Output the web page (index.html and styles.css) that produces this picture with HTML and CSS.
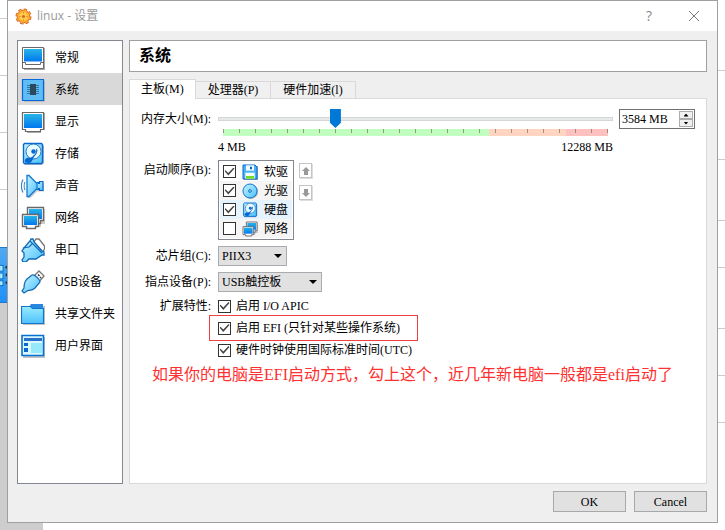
FILE: index.html
```html
<!DOCTYPE html>
<html lang="zh-CN">
<head>
<meta charset="utf-8">
<meta name="viewport" content="width=device-width, initial-scale=1">
<title>linux - 设置</title>
<link rel="stylesheet" href="styles.css">
</head>
<body>
<svg class="defs" width="0" height="0" aria-hidden="true">
  <defs>
    <linearGradient id="screen" x1="0" y1="0" x2="0" y2="1"><stop offset="0" stop-color="#28b4e8"/><stop offset="1" stop-color="#0078f0"/></linearGradient>
    <linearGradient id="pale" x1="0" y1="0" x2="1" y2="1"><stop offset="0" stop-color="#c4f4ff"/><stop offset="1" stop-color="#4cc0ff"/></linearGradient>
    <linearGradient id="folder" x1="0" y1="0" x2="0" y2="1"><stop offset="0" stop-color="#98ecff"/><stop offset="1" stop-color="#50c0fc"/></linearGradient>
    <g id="disk">
      <path d="M3 2h17l2 2v17l-2 2H3l-2-2V4z" fill="#a8b4bc"/>
      <path d="M2.500 1.500h17l1 1v18l-1 1h-17l-1-1v-18z" fill="url(#pale)" stroke="#0868d0" stroke-width="1.400"/>
      <circle cx="11.500" cy="9.500" r="7.500" fill="#e8fcff" stroke="#2878c0"/>
      <circle cx="11.500" cy="9.500" r="2.200" fill="#0868d8"/>
      <path d="M14.500 7c1 3-1 6-3 7" fill="none" stroke="#2878c0" stroke-width="1.400"/>
      <path d="M3 20c-1-3 2-5 5-4l5-3-3 6c-1 2-4 3-7 1z" fill="#0868d0"/>
    </g>
    <g id="net">
      <path d="M9 3h16v15h-4v3H9z" fill="#999" opacity=".5"/>
      <path d="M7.500 1.500h16v13h-3v3h-10v-3h-3z" fill="#fff" stroke="#686868" stroke-width="1.400"/>
      <path d="M9 3h13v10H9z" fill="url(#screen)"/>
      <path d="M2.500 8.500h16v12h-3v2h-9v-2h-4z" fill="#fff" stroke="#686868" stroke-width="1.400"/>
      <path d="M4 10h13v9H4z" fill="url(#screen)"/>
    </g>
  </defs>
</svg>
<div class="backdrop" aria-hidden="true">
  <div class="behind-left">
    <svg class="behind-icon" viewBox="0 0 8 56"><path d="M0 18h3v6H0M0 26h3v6H0M0 34h3v5H0" fill="#a8f0ff" stroke="#0868b8"/><circle cx="7" cy="20" r="1.500" fill="#234"/><circle cx="7" cy="28" r="1.500" fill="#234"/><circle cx="7" cy="36" r="1.500" fill="#234"/></svg>
  </div>
  <div class="behind-right"></div>
</div>
<main class="dialog">
  <header class="titlebar">
    <svg class="gear" viewBox="0 0 17 17"><circle cx="8.500" cy="8.500" r="6.800" fill="none" stroke="#d85818" stroke-width="2.400" stroke-dasharray="3.200 2.140"/><circle cx="8.500" cy="8.500" r="6.300" fill="#ffb438" stroke="#e06c20"/><circle cx="8.500" cy="8.500" r="6.600" fill="none" stroke="#ffb438" stroke-width="1.200" stroke-dasharray="2 3.184" stroke-dashoffset="-.6"/><circle cx="8.500" cy="8.500" r="3.800" fill="#ffd050"/><circle cx="8.500" cy="8.500" r="1.600" fill="#d86820"/><path d="M4.500 8.500h1M11.500 8.500h1M8.500 4.500v1M8.500 11.500v1" stroke="#e07020"/></svg>
    <h1>linux - 设置</h1>
    <button class="window-button" aria-label="帮助">?</button>
    <button class="window-button" aria-label="关闭"><svg width="10" height="10" viewBox="0 0 10 10"><path d="M0 0l10 10M10 0 0 10" stroke="#777"/></svg></button>
  </header>
  <div class="body">
    <nav class="sidebar">
      <a href="#general"><svg viewBox="0 0 24 24"><path d="M2 2h22v22H3z" fill="#aaa"/><path d="M1.500 1.500h21v21h-21z" fill="#fff" stroke="#686868"/><path d="M3 3h18v12.500H3z" fill="url(#screen)"/><path d="M1.500 16.500h3v2h15v-2h3" fill="none" stroke="#686868"/></svg>常规</a>
      <a href="#system" class="current" aria-current="page"><svg viewBox="0 0 24 24"><path d="M3 3h21v21H3z" fill="#aaa" opacity=".6"/><path d="M1.500 1.500h21v21h-21z" fill="#60bcf4" stroke="#0868d8" stroke-width="1.200"/><path d="M6 7.500h12M6 9.500h12M6 11.500h12M6 13.500h12M6 15.500h12" stroke="#2c78a8"/><path d="M9 6h6v11H9z" fill="#2c485c"/></svg>系统</a>
      <a href="#display"><svg viewBox="0 0 24 24"><path d="M3 3h21v17h-4v3H6v-3H3z" fill="#aaa"/><path d="M1.500 2.500h21v17h-3v2h-15v-2h-3z" fill="#fff" stroke="#686868" stroke-width="1.200"/><path d="M3 4h18v14H3z" fill="url(#screen)"/></svg>显示</a>
      <a href="#storage"><svg viewBox="0 0 24 24"><use href="#disk" x="1"/></svg>存储</a>
      <a href="#audio"><svg viewBox="0 0 24 24"><path d="M7 3l3-.5 5 7 8 0v8h-7l-7 7H7z" fill="#aaa" opacity=".6"/><path d="M15 8.500h2.500v1h1v-2h3.500v9h-3.500v-2h-1v1H15" fill="url(#pale)" stroke="#0868c8" stroke-width="1.200"/><path d="M6 1.500h2l8 8v5l-8 8H6z" fill="url(#pale)" stroke="#1878d0" stroke-width="1.300"/><path d="M4 8c-1 2-1 6 0 8M2 5.500c-2 4-2 9 0 13" fill="none" stroke="#3888d0" stroke-width="1.200"/></svg>声音</a>
      <a href="#network"><svg viewBox="0 0 24 24"><use href="#net" x="-1"/></svg>网络</a>
      <a href="#serial"><svg viewBox="0 0 24 24"><path d="M13 4l2-3h3l5.500 7v3l-2 3z" fill="#fff" stroke="#777" stroke-width="1.300"/><path d="M3 10l6-7 1-2h2l1 3 8 9 2 1v3l-2 0-6 4H8l-3 3H2l-1-2 2-3v-4l-2-2z" fill="url(#pale)" stroke="#1068b8" stroke-width="1.300"/><path d="M9 3l12 12M2 10l6-1 3-3" fill="none" stroke="#1068b8" stroke-width="1.200"/></svg>串口</a>
      <a href="#usb"><svg viewBox="0 0 24 24"><path d="M13 6l5-5 5 5-5 6z" fill="#fff" stroke="#777" stroke-width="1.300"/><path d="M17 4.500l1.500 1.500M19 7l1 1" stroke="#333" stroke-width="1.500"/><path d="M11 5c2-1 8 4 8 7l-5 6c-3 3-6 2-8 3l-3 2-2-2 2-3c0-4 1-7 3-9z" fill="url(#pale)" stroke="#1868b0" stroke-width="1.200"/></svg>USB设备</a>
      <a href="#shared"><svg viewBox="0 0 24 24"><path d="M2 4h22v19H2z" fill="#aaa" opacity=".7"/><path d="M8 5l2-3h12v5H8z" fill="#2888e0"/><path d="M.5 4.500h9l2 2h11v15H.5z" fill="url(#folder)" stroke="#1078d0" stroke-width="1.200"/></svg>共享文件夹</a>
      <a href="#ui"><svg viewBox="0 0 24 24"><path d="M2 3h22v21H2z" fill="#aaa" opacity=".7"/><path d="M1 1.500h21.500v20H1z" fill="#d8f8ff" stroke="#0870d0" stroke-width="1.600"/><path d="M3 4h18v3H3z" fill="#2870c8"/><path d="M3 9h4v3H3zM3 14h4v4H3z" fill="#0868d0"/><path d="M10 9h11v10H10z" fill="#98e8fc"/></svg>用户界面</a>
    </nav>
    <section class="content">
      <h2>系统</h2>
      <div class="tabs" role="tablist">
        <button role="tab" aria-selected="true">主板(M)</button>
        <button role="tab" aria-selected="false">处理器(P)</button>
        <button role="tab" aria-selected="false">硬件加速(l)</button>
      </div>
      <div class="panel" role="tabpanel">
        <div class="form">
          <label class="name" for="memory">内存大小(M):</label>
          <div class="memory">
            <div class="scale">
              <input id="memory" class="slider" type="range" min="4" max="12288" value="3584">
              <div class="gauge"></div>
              <div class="limits"><span>4 MB</span><span>12288 MB</span></div>
            </div>
            <div class="spin">
              <input type="text" value="3584 MB" aria-label="内存大小">
              <div class="steps"><button class="up" aria-label="增加"></button><button class="down" aria-label="减少"></button></div>
            </div>
          </div>

          <span class="name">启动顺序(B):</span>
          <div class="boot">
            <div class="boot-list">
              <label><input type="checkbox" checked><svg viewBox="0 0 24 24"><path d="M3 3h21v21H3z" fill="#aaa"/><path d="M1.500 1.500h18l3 3v18h-21z" fill="#48b0f4" stroke="#0868d0" stroke-width="1.500"/><path d="M6 2h12v8H6z" fill="#f0fcff"/><path d="M12 4h3v4h-3z" fill="#0860c0"/><path d="M5 13h14v9H5z" fill="#f4fff8"/><path d="M6 18h12v4H6z" fill="#74dc28"/></svg>软驱</label>
              <label><input type="checkbox" checked><svg viewBox="0 0 24 24"><circle cx="13" cy="13" r="11" fill="#aaa"/><circle cx="12" cy="12" r="10.500" fill="url(#pale)" stroke="#1878d0" stroke-width="1.500"/><circle cx="12" cy="12" r="2" fill="#c8f8ff" stroke="#1068b8" stroke-width="1.500"/></svg>光驱</label>
              <label class="picked"><input type="checkbox" checked><svg viewBox="0 0 24 24"><use href="#disk" x="1"/></svg>硬盘</label>
              <label><input type="checkbox"><svg viewBox="0 0 24 24"><use href="#net" x="-1"/></svg>网络</label>
            </div>
            <div class="move">
              <button aria-label="上移"><svg viewBox="0 0 8 8"><path d="M4 0l4 4H6v4H2V4H0z" fill="#999"/></svg></button>
              <button aria-label="下移"><svg viewBox="0 0 8 8"><path d="M4 8l4-4H6V0H2v4H0z" fill="#999"/></svg></button>
            </div>
          </div>

          <label class="name" for="chipset">芯片组(C):</label>
          <div class="combo"><select id="chipset"><option>PIIX3</option></select></div>

          <label class="name" for="pointer">指点设备(P):</label>
          <div class="combo wide"><select id="pointer"><option>USB触控板</option></select></div>

          <span class="name short">扩展特性:</span>
          <div class="features">
            <label><input type="checkbox" checked>启用 I/O APIC</label>
            <label class="marked"><input type="checkbox" checked>启用 EFI (只针对某些操作系统)</label>
            <label><input type="checkbox" checked>硬件时钟使用国际标准时间(UTC)</label>
          </div>
        </div>
        <p class="note">如果你的电脑是EFI启动方式，勾上这个，近几年新电脑一般都是efi启动了</p>
      </div>
    </section>
  </div>
  <footer class="actions"><button>OK</button><button>Cancel</button></footer>
</main>
</body>
</html>
```
FILE: styles.css
```css
* { box-sizing: border-box; }

body {
  margin: 0;
  min-height: 100vh;
  display: flex;
  padding: 0 7px 7px;
  position: relative;
  background: #fff;
  color: #000;
  font: 12px/16px "Liberation Serif", "Noto Sans CJK SC", serif;
}

button, input, select { font: inherit; color: inherit; margin: 0; padding: 0; }
h1, h2, p { margin: 0; }
svg { display: block; flex: none; }
.defs { position: absolute; }

/* Window that shows from behind the dialog */
.backdrop { position: absolute; inset: 0; }
.behind-left {
  position: absolute;
  inset: 0 auto 0 0;
  width: 43px;
  background:
    linear-gradient(#ccc, #ccc) 0 18px / 100% 1px no-repeat,
    linear-gradient(#ccc, #ccc) 0 75px / 100% 1px no-repeat,
    linear-gradient(#ccc, #ccc) 0 132px / 100% 1px no-repeat,
    linear-gradient(#ccc, #ccc) 0 189px / 100% 1px no-repeat,
    linear-gradient(#fff, #fff) 0 0 / 100% 247px no-repeat,
    #cdcdcd;
}
.behind-icon {
  position: absolute;
  top: 247px;
  left: 0;
  width: 8px;
  height: 56px;
  background: linear-gradient(#50a8f0, #2090f8);
  border-block: 1px solid #2078c8;
}
.behind-right {
  position: absolute;
  inset: 0 0 0 auto;
  width: 8px;
  background:
    linear-gradient(#ccc, #ccc) 0 70px / 100% 1px no-repeat,
    linear-gradient(#ccc, #ccc) 0 159px / 100% 1px no-repeat,
    linear-gradient(#ccc, #ccc) 0 220px / 100% 1px no-repeat,
    linear-gradient(#ccc, #ccc) 0 267px / 100% 1px no-repeat,
    linear-gradient(#ccc, #ccc) 0 328px / 100% 1px no-repeat,
    linear-gradient(#ccc, #ccc) 0 375px / 100% 1px no-repeat,
    linear-gradient(#ccc, #ccc) 0 422px / 100% 1px no-repeat;
}

.dialog {
  position: relative;
  flex: 1;
  display: flex;
  flex-direction: column;
  background: #efefef;
  border: 1px solid #a0a0a0;
}

.titlebar {
  display: flex;
  align-items: center;
  height: 30px;
  padding: 0 8px 0 7px;
  background: #fff;
}
.gear { width: 17px; height: 17px; }
.titlebar h1 {
  flex: 1;
  margin-left: 5px;
  font: 12px/16px "Open Sans", "Noto Sans CJK SC", sans-serif;
  color: #999;
}
.window-button {
  display: grid;
  place-items: center;
  width: 30px;
  height: 28px;
  margin-left: 15px;
  border: 0;
  background: none;
  color: #888;
  font: 14px/16px "Open Sans", sans-serif;
}

.body {
  flex: 1;
  display: flex;
  gap: 6px;
  padding: 9px 10px 0 9px;
}

.sidebar {
  width: 106px;
  flex: none;
  background: #fff;
  border: 1px solid #828790;
  font-family: "Open Sans", "Noto Sans CJK SC", sans-serif;
}
.sidebar a {
  display: flex;
  align-items: center;
  gap: 10px;
  height: 32px;
  padding: 1px 0 0 3px;
  color: inherit;
  text-decoration: none;
  white-space: nowrap;
}
.sidebar svg { width: 24px; height: 24px; }
.sidebar .current { background: #d9d9d9; }

.content {
  flex: 1;
  min-width: 0;
  display: flex;
  flex-direction: column;
}
.content h2 {
  padding: 0 9px;
  border: 1px solid #a0a0a0;
  background: #fff;
  font-size: 16px;
  line-height: 30px;
}

.tabs {
  display: flex;
  align-items: flex-end;
  margin-top: 7px;
}
.tabs button {
  height: 17px;
  padding: 0 12px;
  border: 1px solid #d9d9d9;
  border-width: 1px 1px 0 0;
  background: #f0f0f0;
  line-height: 16px;
}
.tabs button[aria-selected="true"] {
  position: relative;
  z-index: 1;
  height: 20px;
  margin-bottom: -1px;
  padding: 0 11px 1px;
  border-left-width: 1px;
  background: #fff;
}

.panel {
  flex: 1;
  padding: 10px 11px 0 10px;
  border: 1px solid #d9d9d9;
  background: #fff;
}
.form {
  display: grid;
  grid-template-columns: 71px 1fr;
  column-gap: 7px;
  row-gap: 6px;
}
.name {
  line-height: 20px;
  text-align: right;
  white-space: nowrap;
}
.name.short { line-height: 16px; }

.memory {
  display: flex;
  gap: 6px;
  align-items: flex-start;
}
.scale { flex: 1; }
.slider {
  appearance: none;
  display: block;
  width: 100%;
  height: 19px;
  background: linear-gradient(#e7eaea, #e7eaea) center / calc(100% - 2px) 2px no-repeat,
    linear-gradient(#d6d6d6, #d6d6d6) center / 100% 4px no-repeat;
}
.slider::-webkit-slider-thumb {
  appearance: none;
  width: 11px;
  height: 19px;
  background: #0078d7;
  clip-path: polygon(0 0, 100% 0, 100% 72%, 50% 100%, 0 72%);
}
.gauge {
  height: 7px;
  margin: 1px 5px 0;
  background:
    repeating-linear-gradient(90deg, rgba(110, 110, 90, .65) 0 1px, transparent 1px 16px) 0 0 / 100% 4px no-repeat,
    linear-gradient(90deg, #c0ffc0 69%, #ffd4c0 69% 89%, #ffc0c0 89%);
}
.limits {
  display: flex;
  justify-content: space-between;
  margin-top: 4px;
  line-height: 14px;
}
.spin {
  display: flex;
  width: 76px;
  height: 20px;
  padding: 1px;
  border: 1px solid #707070;
  background: #fff;
}
.spin input {
  flex: 1;
  min-width: 0;
  padding-left: 1px;
  border: 0;
  background: none;
}
.steps {
  display: flex;
  flex-direction: column;
  width: 14px;
}
.steps button {
  flex: 1;
  display: grid;
  place-items: center;
  border: 1px solid #acacac;
  background: #f0f0f0;
}
.steps button::before {
  content: "";
  width: 5px;
  height: 3px;
  background: #000;
  clip-path: polygon(50% 0, 100% 100%, 0 100%);
}
.steps .down::before { clip-path: polygon(0 0, 100% 0, 50% 100%); }

input[type="checkbox"] {
  appearance: none;
  display: grid;
  place-items: center;
  flex: none;
  width: 13px;
  height: 13px;
  border: 1px solid #333;
  background: #fff;
}
input[type="checkbox"]:checked::before {
  content: "";
  width: 10px;
  height: 8px;
  background: #444;
  clip-path: polygon(0 45%, 10% 35%, 38% 70%, 90% 0, 100% 12%, 38% 100%);
}

.boot {
  display: flex;
  gap: 5px;
}
.boot-list {
  width: 76px;
  padding: 1px;
  border: 1px solid #828790;
}
.boot-list label {
  display: flex;
  align-items: center;
  height: 19px;
  padding-left: 3px;
}
.boot-list label:nth-child(even) { background: #f5f5f5; }
.boot-list .picked { background: #e5f3ff; }
.boot-list svg {
  width: 16px;
  height: 16px;
  margin: 0 6px;
}
.move {
  display: flex;
  flex-direction: column;
  gap: 7px;
  padding-top: 3px;
}
.move button {
  display: grid;
  place-items: center;
  width: 13px;
  height: 15px;
  border: 1px solid #c4c4c4;
  background: #fff;
  box-shadow: 1px 1px #ddd;
}
.move svg { width: 8px; height: 8px; }

.combo {
  position: relative;
  width: 69px;
}
.combo.wide { width: 104px; }
.combo select {
  appearance: none;
  display: block;
  width: 100%;
  height: 20px;
  padding-left: 3px;
  border: 1px solid #a8acb0;
  border-radius: 0;
  background: #e1e1e1;
}
.combo::after {
  content: "";
  position: absolute;
  top: 8px;
  right: 5px;
  width: 8px;
  height: 4px;
  background: #000;
  clip-path: polygon(0 0, 100% 0, 50% 100%);
  pointer-events: none;
}

.features {
  display: flex;
  flex-direction: column;
  align-items: flex-start;
  gap: 6px;
}
.features label {
  position: relative;
  display: flex;
  align-items: center;
  gap: 5px;
  white-space: nowrap;
}
.marked::after {
  content: "";
  position: absolute;
  inset: -5px -18px -5px -9px;
  border: 1px solid #f04040;
}

.note {
  margin: 7px 0 0 12px;
  color: #ff3030;
  font-size: 16px;
  line-height: 20px;
}

.actions {
  display: flex;
  justify-content: flex-end;
  gap: 8px;
  padding: 7px 10px 10px;
}
.actions button {
  width: 73px;
  height: 21px;
  border: 1px solid #a8a8a8;
  background: #e1e1e1;
}
```
